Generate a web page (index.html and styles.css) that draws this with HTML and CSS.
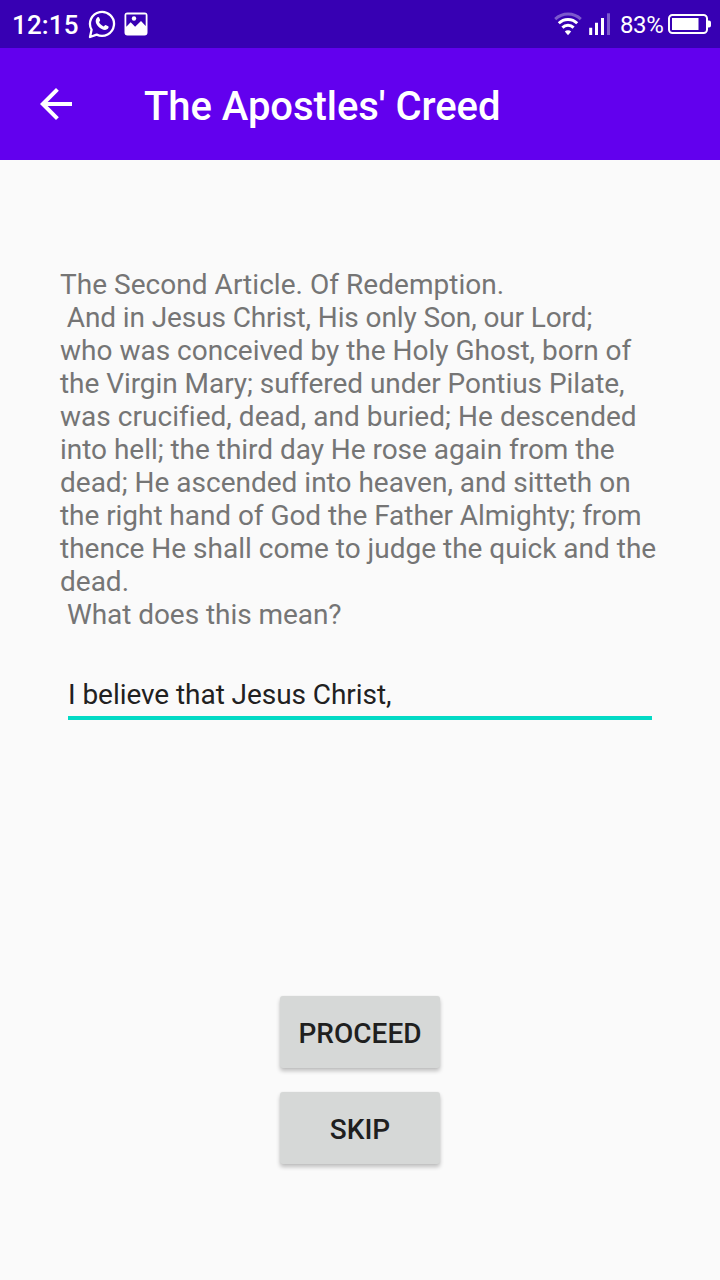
FILE: index.html
```html
<!DOCTYPE html>
<html lang="en">
<head>
<meta charset="utf-8">
<title>The Apostles' Creed</title>
<link rel="stylesheet" href="styles.css">
</head>
<body>
<div class="status">
  <span class="clock">12:15</span>
  <svg class="whatsapp" width="28" height="30" viewBox="0 0 28 30" fill="none">
    <path d="M2 28l1.600-7.200A12 12 0 1 1 8.700 25.600z" stroke="#fff" stroke-width="2.300" stroke-linejoin="round"/>
    <path d="M9.300 8.400c.6-.6 1.500-.5 1.800.2l1 2.300c.3.8-.9 1.700-1.100 2.200.9 2 2.500 3.500 4.600 4.400.6-.2 1.300-1.700 2-1.500l2.600 1.300c.8.400.3 1.800-.3 2.500-1.800 1.700-4.200 1.200-6.200.2-2.400-1.200-4.300-3.300-5.500-5.600-.9-2-.6-4.500 1.100-6z" fill="#fff"/>
  </svg>
  <svg class="picture" width="24" height="24" viewBox="0 0 24 24">
    <path fill="#fff" fill-rule="evenodd" d="M3.500.5h17a3 3 0 0 1 3 3v17a3 3 0 0 1-3 3h-17a3 3 0 0 1-3-3v-17a3 3 0 0 1 3-3zM2.300 2.500v12.200L6.700 10.200l4.400 4.500 5.900-5.700 4.700 5V2.500z"/>
    <circle cx="10" cy="6.500" r="2.200" fill="#fff"/>
  </svg>
  <span class="spacer"></span>
  <svg class="wifi" width="28" height="24" viewBox="0 0 28 24" fill="none" stroke="#fff" stroke-width="2.900">
    <path d="M1.200 7.100a18.500 18.500 0 0 1 25.600 0" stroke-opacity=".35"/>
    <path d="M4.800 11.300a13 13 0 0 1 18.400 0M8.400 15.600a8 8 0 0 1 11.200 0"/>
    <path d="M10.800 19.500a4.500 4.500 0 0 1 6.400 0L14 23.200z" fill="#fff" stroke="none"/>
  </svg>
  <svg class="signal" width="22" height="22" viewBox="0 0 22 22" fill="#fff">
    <path d="M.2 14.700h3V22h-3zM6 9.700h3V22H6zM12 5h3v17h-3z"/>
    <path d="M18 .3h3V22h-3z" fill-opacity=".35"/>
  </svg>
  <span class="percent">83%</span>
  <svg class="battery" width="44" height="20" viewBox="0 0 44 20">
    <rect x="1" y="1" width="38" height="18" rx="3.500" fill="none" stroke="#fff" stroke-width="2"/>
    <path d="M4 4h26.500v12H4zM40 6.500h1a2 2 0 0 1 2 2v3a2 2 0 0 1-2 2h-1z" fill="#fff"/>
  </svg>
</div>
<header class="appbar">
  <svg class="back" width="48" height="48" viewBox="0 0 24 24" fill="#fff"><path d="M20 11H7.830l5.590-5.590L12 4l-8 8 8 8 1.410-1.410L7.830 13H20v-2z"/></svg>
  <h1 class="title">The Apostles' Creed</h1>
</header>
<main class="content">
  <p class="passage"><span class="wide">The Second Article. Of Redemption.</span>
<span class="tightest"> And in Jesus Christ, His only Son, our Lord;</span>
who was conceived by the Holy Ghost, born of
<span class="tighter">the Virgin Mary; suffered under Pontius Pilate,</span>
<span class="wide">was crucified, dead, and buried; He descended</span>
<span class="tight">into hell; the third day He rose again from the</span>
dead; He ascended into heaven, and sitteth on
<span class="tighter">the right hand of God the Father Almighty; from</span>
thence He shall come to judge the quick and the
dead.
<span class="tighter"> What does this mean?</span></p>
  <input class="answer" type="text" value="I believe that Jesus Christ,">
  <div class="actions">
    <button class="button">PROCEED</button>
    <button class="button">SKIP</button>
  </div>
</main>
</body>
</html>
```
FILE: styles.css
```css
* { box-sizing: border-box; }
body {
  margin: 0;
  width: 720px;
  height: 1280px;
  overflow: hidden;
  background: #fafafa;
  font-family: Roboto, sans-serif;
}
svg { display: block; flex: none; }
.status {
  display: flex;
  align-items: flex-start;
  height: 48px;
  padding: 0 9px 0 12px;
  background: #3700b3;
  color: #fff;
}
.clock {
  width: 76px;
  padding-top: 10px;
  font-size: 26px;
  font-weight: 500;
  line-height: 30px;
  letter-spacing: 0.15px;
}
.whatsapp { margin-top: 9px; }
.picture { margin: 12px 0 0 8px; }
.spacer { flex: 1; }
.wifi { margin: 12px 7px 0 0; }
.signal { margin: 13px 9px 0 0; }
.percent {
  width: 48px;
  padding-top: 11px;
  font-size: 24px;
  line-height: 28px;
  letter-spacing: -0.4px;
}
.battery { margin-top: 14px; margin-right: -1px; }
.appbar {
  display: flex;
  align-items: center;
  height: 112px;
  padding: 0 32px;
  background: #6200ee;
  color: #fff;
}
.title {
  margin: 6px 0 0 64px;
  font-size: 40px;
  font-weight: 500;
  line-height: 48px;
  letter-spacing: -0.05px;
}
.content {
  display: flex;
  flex-direction: column;
  padding: 108px 60px 0;
}
.passage {
  margin: 0;
  color: #757575;
  font-size: 28px;
  line-height: 33px;
  white-space: pre;
}
.wide { letter-spacing: 0.035px; }
.tight { letter-spacing: -0.03px; }
.tighter { letter-spacing: -0.055px; }
.tightest { letter-spacing: -0.11px; }
.answer {
  height: 50px;
  margin: 39px 8px 0;
  padding: 3px 0 0;
  border: 0;
  border-bottom: 4px solid #03dac5;
  outline: 0;
  background: transparent;
  color: #212121;
  font: 28px/33px Roboto, sans-serif;
  letter-spacing: -0.06px;
}
.actions {
  display: flex;
  flex-direction: column;
  align-items: center;
  gap: 24px;
  margin-top: 276px;
}
.button {
  width: 160px;
  height: 72px;
  padding: 2px 0 0;
  border: 0;
  border-radius: 3px;
  background: #d6d8d7;
  box-shadow: 0 3px 4px rgba(0, 0, 0, 0.24), 0 0 2px rgba(0, 0, 0, 0.06);
  color: #1f1f1f;
  font: 500 28px/33px Roboto, sans-serif;
}
```
